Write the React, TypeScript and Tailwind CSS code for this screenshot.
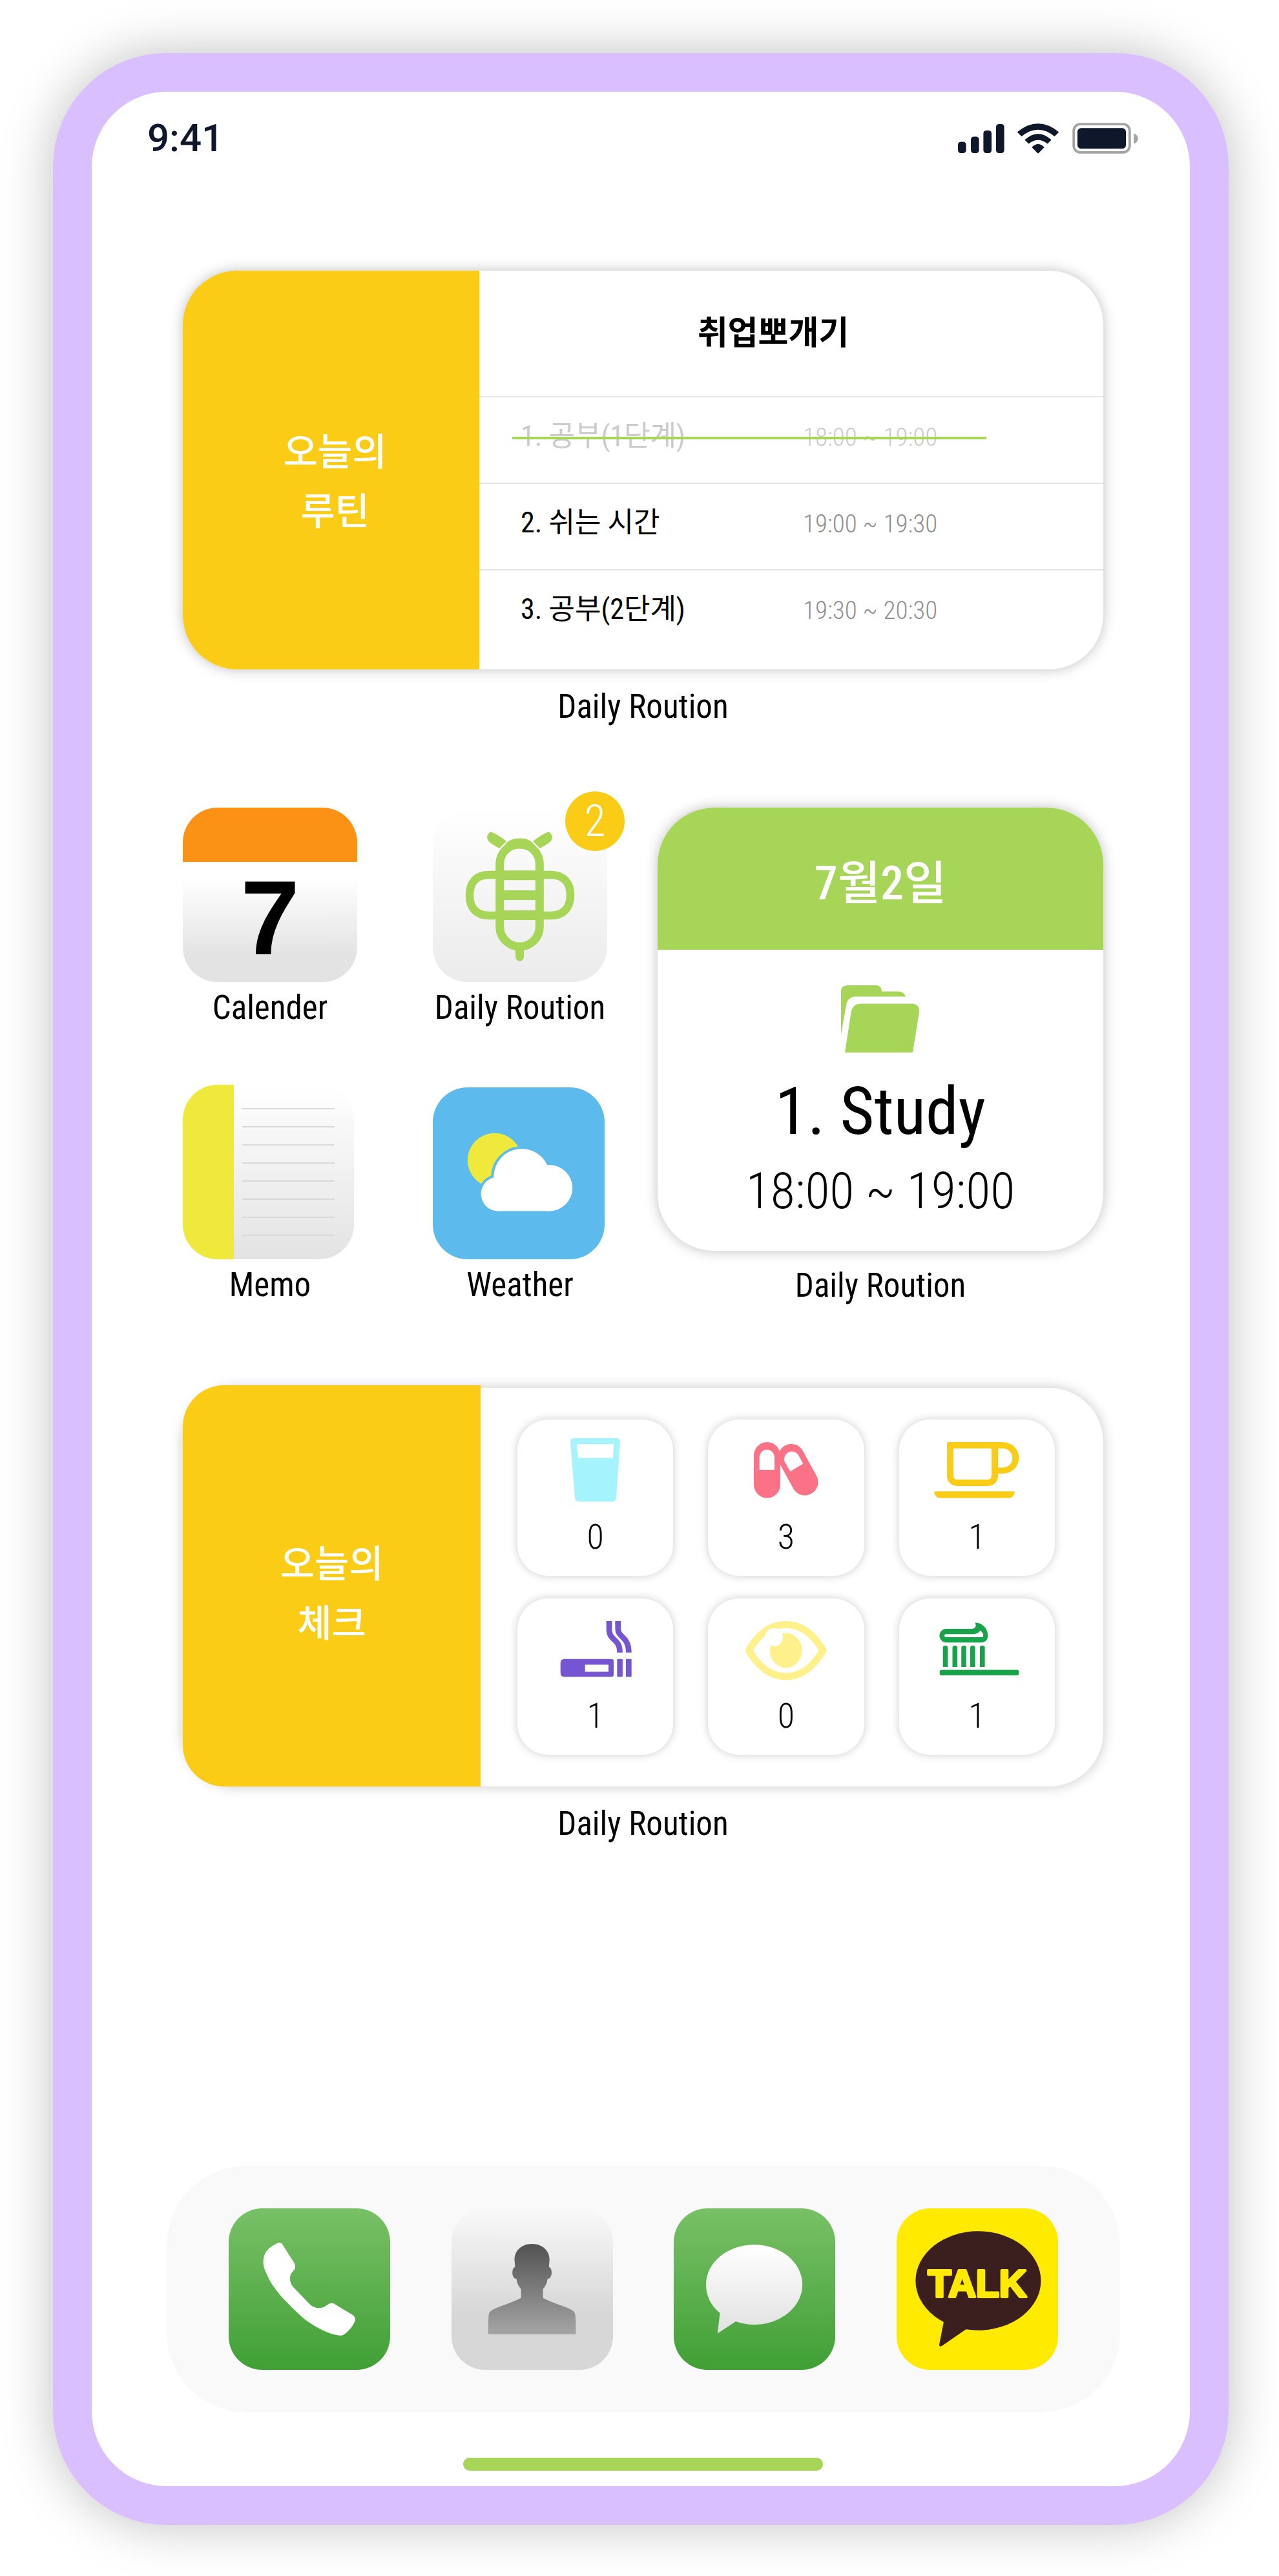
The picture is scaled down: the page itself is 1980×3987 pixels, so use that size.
import type { ReactNode } from 'react';

const routines = [
  { id: 1, title: '1. 공부(1단계)', time: '18:00 ~ 19:00', done: true },
  { id: 2, title: '2. 쉬는 시간', time: '19:00 ~ 19:30', done: false },
  { id: 3, title: '3. 공부(2단계)', time: '19:30 ~ 20:30', done: false },
];

function StatusIcons() {
  return (
    <svg viewBox="15 13 279 48" className="h-12 w-[279px]" role="img" aria-label="Signal, Wi-Fi and battery">
      <g fill="#0f172a">
        <rect x="15" y="42.5" width="12.6" height="17.5" rx="4.5" />
        <rect x="35" y="34.5" width="12.6" height="25.5" rx="4.5" />
        <rect x="54.4" y="25" width="12.6" height="35" rx="4.5" />
        <rect x="74" y="15" width="12.6" height="45" rx="4.5" />
        <path d="M139 60.7L129.3 51Q139 40.800 148.700 51Z" />
        <path d="M118.300 39.400Q139 21 159.700 39.400L153.500 45.600Q139 34 124.500 45.600Z" />
        <path d="M106.700 27.400Q139 1 171.300 27.400L164.500 34.200Q139 13.500 113.500 34.200Z" />
        <rect x="200" y="21.300" width="75" height="31.800" rx="5.500" />
      </g>
      <rect x="194.200" y="15.200" width="86.600" height="43.600" rx="10" fill="none" stroke="#a3a3a3" strokeWidth="3.800" />
      <path d="M287.300 29.300Q293.700 32 293.700 37.500T287.300 45.700Z" fill="#a3a3a3" />
    </svg>
  );
}

function BeeIcon() {
  return (
    <svg viewBox="0 0 270 270" className="size-[270px]" aria-hidden="true">
      <g fill="none" stroke="#a6d558" strokeWidth="12.500">
        <rect x="103.700" y="56.500" width="61.600" height="158.500" rx="30.800" strokeWidth="13" />
        <path d="M103.700 104H87C67 104 57 116 57 135.500S67 167 87 167H103.700M165.300 104H182C202 104 213 116 213 135.500S202 167 182 167H165.300" />
        <path d="M103 104.700H166M103 135.500H166M103 166.500H166" strokeWidth="15" />
        <path d="M109 128V143M160 128V143" strokeWidth="6" />
        <path d="M134.500 220V231" strokeWidth="13" strokeLinecap="round" />
      </g>
      <path d="M89.700 37.300Q101 42 114 52L103 63Q94 58 87 53Q80 44 89.700 37.300ZM179.300 37.300Q168 42 155 52L166 63Q175 58 182 53Q189 44 179.300 37.300Z" fill="#a6d558" />
      <path d="M110 60Q114 52 125 48.500Q134.500 46.500 144 48.500Q155 52 159 60L154 69Q134.500 58 115 69Z" fill="#a6d558" />
    </svg>
  );
}

function WeatherIcon() {
  return (
    <svg viewBox="0 0 266 266" className="size-[266px]" aria-hidden="true">
      <circle cx="95.800" cy="112.700" r="42" fill="#eee93a" />
      <g fill="#5cbbec">
        <circle cx="137.800" cy="138.500" r="47.500" />
        <circle cx="101" cy="165" r="30.300" />
      </g>
      <g fill="#fff">
        <circle cx="137.800" cy="138.500" r="43.500" />
        <circle cx="180.500" cy="155.700" r="35.700" />
        <circle cx="101" cy="165" r="26.400" />
        <rect x="101" y="145" width="80" height="46.400" />
      </g>
    </svg>
  );
}

function FolderIcon() {
  return (
    <svg viewBox="0 0 122 105" className="h-[105px] w-[122px]" fill="#a6d558" aria-hidden="true">
      <path d="M0 77V11Q0 1 10 1H54Q63 1 63 10.500H89Q98 11 100 18.500H22Q10 19 8 32Z" />
      <path d="M6 105L15.500 43Q18 29.500 31 29.500H109Q122 30 121 42L111 105Z" />
    </svg>
  );
}

const glassIcon = (
  <path fill="#a5f3fc" fillRule="evenodd" d="M47 5H112Q118.500 5 118 11L112 97Q111 103 106 103H54Q49 103 48 97L41 11Q41 5 47 5ZM51 14L53 35.400H107L108 14Z" />
);

const pillsIcon = (
  <g>
    <rect x="30" y="11" width="41" height="86.500" rx="20.500" fill="#fb7185" />
    <path d="M88 34.500L109 73" stroke="#fb7185" strokeWidth="41" strokeLinecap="round" />
    <path fill="#fff" d="M38.700 54V33.500A11.700 12 0 0 1 62 33.500V54Z" />
    <path fill="#fff" d="M86.300 56.500L106.300 44.600L98.700 30.500A12 12 0 0 0 77.500 41Z" />
  </g>
);

const cupIcon = (
  <path
    fill="#facc15"
    fillRule="evenodd"
    d="M37 11H119C135 11 145.300 22 145.300 35.400S135 59.800 119 59.800H113V63C113 73 106 79 96 79H51C41 79 34 73 34 63V14Q34 11 37 11ZM43.700 20.800V62Q43.700 69 50 69H97Q103 69 103 62V20.800ZM113 20.800V50.600H119C130 50.600 135.300 43 135.300 35.700S130 20.800 119 20.800ZM16 87.300H137Q139.500 87.300 138.500 90Q136 97.400 130 97.400H23Q17 97.400 14.500 90Q13.500 87.300 16 87.300Z"
  />
);

const cigaretteIcon = (
  <g fill="#7655d2">
    <path fillRule="evenodd" d="M32 69.700H104.500Q108 69.700 108 73V94Q108 97.300 104.500 97.300H32Q25.700 97.300 25.700 91V76Q25.700 69.700 32 69.700ZM63.700 78.500V89.500H100V78.500Z" />
    <rect x="113.300" y="69.700" width="8.600" height="27.600" rx="1" />
    <rect x="126.900" y="69.700" width="8.800" height="27.600" rx="1" />
    <path d="M101 11V24C101 42 117.600 37 117.600 59.800M114.700 11V23C114.700 37 131.300 34 131.300 59.800" fill="none" stroke="#7655d2" strokeWidth="8.700" />
  </g>
);

const eyeIcon = (
  <g>
    <path d="M22.300 56.500C38 29 58 16.500 79.700 16.500S121 29 137 56.500C121 84 101 96.700 79.700 96.700S38 84 22.300 56.500Z" fill="none" stroke="#fef08a" strokeWidth="11" strokeLinejoin="round" />
    <ellipse cx="79.700" cy="56.500" rx="24.800" ry="27" fill="#fef08a" />
    <circle cx="61" cy="36" r="14" fill="#fff" />
  </g>
);

const toothbrushIcon = (
  <g fill="#16a34a">
    <rect x="22.700" y="86.500" width="122.600" height="8.600" rx="3" />
    <path d="M27.700 82V52Q27.700 49 31.500 49T35.300 52V82ZM42.500 82V52Q42.500 49 46.300 49T50.100 52V82ZM56.200 82V52Q56.200 49 60 49T63.800 52V82ZM70 82V52Q70 49 73.800 49T77.600 52V82ZM85 82V52Q85 49 88.800 49T92.600 52V82Z" />
    <path fillRule="evenodd" d="M33 23H71C77 23 80.500 20 77.500 13.500C88 13 97.300 22 97.300 34C97.300 40 93 44.200 87 44.200H33A10.600 10.600 0 0 1 33 23ZM33 31.200H74C80 31.200 83.500 29 85.500 25.500C89 28 90.300 31 90.300 33.500Q90 36 87.500 36H33Q30 36 30 33.600T33 31.200Z" />
  </g>
);

const checks: { name: string; count: number; icon: ReactNode }[] = [
  { name: '물', count: 0, icon: glassIcon },
  { name: '약', count: 3, icon: pillsIcon },
  { name: '커피', count: 1, icon: cupIcon },
  { name: '담배', count: 1, icon: cigaretteIcon },
  { name: '눈', count: 0, icon: eyeIcon },
  { name: '양치', count: 1, icon: toothbrushIcon },
];

function Label({ children }: { children: ReactNode }) {
  return <span className="block text-center text-[51px] leading-[64px] whitespace-nowrap">{children}</span>;
}

function AppButton({ label, children }: { label: string; children: ReactNode }) {
  return (
    <button type="button" className="flex w-[270px] flex-col items-center gap-2">
      <span className="flex h-[270px] w-full items-end">{children}</span>
      <Label>{label}</Label>
    </button>
  );
}

function DockButton({ label, className, children }: { label: string; className: string; children: ReactNode }) {
  return (
    <button type="button" aria-label={label} className={`size-[250px] overflow-hidden rounded-[52px] ${className}`}>
      {children}
    </button>
  );
}

export default function App() {
  return (
    <main className="flex min-h-screen flex-col bg-white pt-[82px] pr-[78px] pb-[79px] pl-[82px] font-['Roboto_Condensed','Noto_Sans_CJK_KR',sans-serif] text-black">
      <div className="flex flex-1 flex-col rounded-[176px] border-[60px] border-[#dabfff] bg-white shadow-[0_0_80px_rgba(0,0,0,0.25)]">
        <header className="flex items-center justify-between pt-10 pr-20 pl-[86px] font-['Roboto'] text-[60px] leading-[64px] font-medium text-[#0f172a]">
          <time>9:41</time>
          <StatusIcons />
        </header>

        <div className="flex flex-1 flex-col pt-[173px] pr-[134px] pl-[141px]">
          <section>
            <div className="flex overflow-hidden rounded-[84px] shadow-[0_0_20px_rgba(0,0,0,0.25)]">
              <h2 className="flex w-[459px] shrink-0 items-center justify-center bg-[#facc15] pt-9 pl-3 text-center text-[58px] leading-[92px] font-medium text-white">
                오늘의
                <br />
                루틴
              </h2>
              <div className="flex-1">
                <h3 className="flex h-[194px] items-center justify-center pr-14 text-[51px] font-bold">취업뽀개기</h3>
                <ul className="pb-[21px]">
                  {routines.map((r) => (
                    <li
                      key={r.id}
                      className={`relative flex h-[134px] items-center border-t-2 border-[#e5e5e5] pb-3 pl-16 ${r.done ? 'text-[#cbcbcb]' : ''}`}
                    >
                      <span className="w-[437px] text-[44px]">{r.title}</span>
                      <span className={`pt-1 text-[39px] font-light ${r.done ? '' : 'text-[#8f8f8f]'}`}>{r.time}</span>
                      {r.done && <span className="absolute top-[61px] left-[51px] h-1 w-[734px] bg-[#a6d558]" />}
                    </li>
                  ))}
                </ul>
              </div>
            </div>
            <div className="pt-[26px]">
              <Label>Daily Roution</Label>
            </div>
          </section>

          <section className="flex justify-between gap-[78px] pt-[124px]">
            <div className="grid grid-cols-[270px_270px] gap-x-[117px] gap-y-[86px]">
              <AppButton label="Calender">
                <span className="flex size-full flex-col overflow-hidden rounded-[54px] bg-linear-to-b from-white from-40% to-[#e3e3e3] to-85%">
                  <span className="h-[84px] bg-[#fb9216]" />
                  <span className="flex flex-1 items-center justify-center pb-3 font-['Liberation_Sans'] text-[164px] leading-none font-bold">7</span>
                </span>
              </AppButton>
              <AppButton label="Daily Roution">
                <span className="relative size-full rounded-[54px] bg-linear-to-b from-white to-[#ebebeb]">
                  <BeeIcon />
                  <span className="absolute -top-[25px] -right-[27px] flex size-[92px] items-center justify-center rounded-full bg-[#facc15] text-[68px] leading-none font-light text-white">
                    2
                  </span>
                </span>
              </AppButton>
              <AppButton label="Memo">
                <span className="flex h-full w-[265px] overflow-hidden rounded-[54px] bg-linear-to-b from-white to-[#e3e3e3]">
                  <span className="w-[79px] bg-[#eee93a]" />
                  <span className="flex flex-1 flex-col gap-[26px] pt-9 pr-[30px] pl-[13px]">
                    {Array.from({ length: 8 }, (_, i) => (
                      <span key={i} className="h-0.5 bg-[#d9d9d9]" />
                    ))}
                  </span>
                </span>
              </AppButton>
              <AppButton label="Weather">
                <span className="rounded-[54px] bg-[#5cbbec]">
                  <WeatherIcon />
                </span>
              </AppButton>
            </div>

            <div className="flex-1">
              <article className="flex h-[686px] flex-col items-center overflow-hidden rounded-[88px] shadow-[0_0_20px_rgba(0,0,0,0.25)]">
                <h2 className="flex h-[220px] w-full items-center justify-center bg-[#a6d558] pt-4 text-[72px] font-medium text-white">
                  7월2일
                </h2>
                <div className="flex flex-col items-center pt-[54px]">
                  <FolderIcon />
                  <strong className="pt-7 text-[102px] leading-[126px] font-normal">1. Study</strong>
                  <span className="text-[78px] leading-[122px] font-light">18:00 ~ 19:00</span>
                </div>
              </article>
              <div className="pt-[22px]">
                <Label>Daily Roution</Label>
              </div>
            </div>
          </section>

          <section className="pt-[126px]">
            <div className="flex rounded-[84px] shadow-[0_0_20px_rgba(0,0,0,0.22)]">
              <h2 className="-mt-1 flex w-[461px] shrink-0 items-center justify-center rounded-l-[64px] bg-[#facc15] pt-6 text-center text-[58px] leading-[92px] font-medium text-white">
                오늘의
                <br />
                체크
              </h2>
              <div className="grid flex-1 grid-cols-3 gap-x-[54px] gap-y-[35px] py-[49px] pr-[75px] pl-[57px]">
                {checks.map((c) => (
                  <button
                    key={c.name}
                    type="button"
                    aria-label={`${c.name} ${c.count}`}
                    className="flex h-[242px] flex-col items-center rounded-[48px] bg-white pt-6 shadow-[0_0_14px_rgba(0,0,0,0.2)]"
                  >
                    <svg viewBox="0 0 160 104" className="h-[104px] w-40" fill="none" aria-hidden="true">
                      {c.icon}
                    </svg>
                    <span className="pt-[22px] text-[54px] leading-[64px] font-light">{c.count}</span>
                  </button>
                ))}
              </div>
            </div>
            <div className="pt-[26px]">
              <Label>Daily Roution</Label>
            </div>
          </section>

          <nav className="-mr-[26px] -ml-[25px] mt-auto flex h-[382px] items-center justify-between rounded-[124px] bg-[#f9f9f9] px-24">
            <DockButton label="Phone" className="bg-linear-to-b from-[#78c066] to-[#3fa035]">
              <svg viewBox="0 0 250 250" className="size-full">
                <path
                  fill="#fff"
                  d="M78.500 53.300C81 53.300 83 55 84 57L101 83.700C103 87 104 91 101.500 95L97 100.500C94 105 94 115 99.400 121.300L126 148.700C132 155 144 156 150 151L154 148.500C157 146.500 161 146 164.300 148.300L192 165C195.500 167.500 196.500 171 195.500 174.500C192.500 182 186 190 179 195C175 198 169 197 157.500 193.500C140 187 125 178 114 168.500C102 157.500 91 146.500 80 134.700C70 122 64 114 60.600 105.300C55 94 53 88 53.800 80C54.500 69 61 61 72.700 55.300Q76 53.300 78.500 53.300Z"
                />
              </svg>
            </DockButton>
            <DockButton label="Contacts" className="bg-linear-to-b from-[#f9f9f9] to-[#d7d7d7] to-65%">
              <svg viewBox="0 0 250 250" className="size-full">
                <defs>
                  <linearGradient id="person" x1="0" y1="0" x2="0" y2="1">
                    <stop offset="0" stopColor="#525252" />
                    <stop offset="1" stopColor="#a5a5a5" />
                  </linearGradient>
                </defs>
                <path
                  fill="url(#person)"
                  d="M124.600 55C108 55 97.500 66 97.500 79L98.400 91C93 91 92 109 100.500 109C101.500 116 104 121 107.600 125V138.700C97 144 82 149 67.400 155C61 158 58 160 57.500 166C56.700 175 56.700 185 56.700 195H192.500C192.500 185 192.500 175 191.700 166C191.200 160 188 158 181.800 155C167 149 152 144 141.600 138.700V125C145.200 121 147.700 116 148.700 109C157.200 109 156.200 91 150.800 91L151.700 79C151.700 66 141.200 55 124.600 55Z"
                />
              </svg>
            </DockButton>
            <DockButton label="Messages" className="bg-linear-to-b from-[#78c066] to-[#3fa035]">
              <svg viewBox="0 0 250 250" className="size-full">
                <defs>
                  <linearGradient id="bubble" x1="0" y1="56" x2="0" y2="194" gradientUnits="userSpaceOnUse">
                    <stop offset="0" stopColor="#fff" />
                    <stop offset="1" stopColor="#e1e1e1" />
                  </linearGradient>
                </defs>
                <path
                  fill="url(#bubble)"
                  d="M124.600 56.300C165.800 56.300 199.200 84 199.200 118S165.800 180 124.600 180Q110 180 96 175L67.700 193.700L71.600 162C58 151 50 136 50 118C50 84 83.400 56.300 124.600 56.300Z"
                />
              </svg>
            </DockButton>
            <DockButton label="KakaoTalk" className="bg-[#ffea00]">
              <svg viewBox="0 0 250 250" className="size-full">
                <ellipse cx="126.400" cy="112" rx="97" ry="76.700" fill="#3b1e1e" />
                <path d="M74 170L66 211Q66 215 70 213L112 184Z" fill="#3b1e1e" />
                <text
                  x="125"
                  y="137"
                  textAnchor="middle"
                  fill="#ffea00"
                  stroke="#ffea00"
                  strokeWidth="4"
                  strokeLinejoin="round"
                  className="font-['Liberation_Sans'] text-[59px] font-bold"
                >
                  TALK
                </text>
              </svg>
            </DockButton>
          </nav>
          <div className="mx-auto mt-[70px] mb-6 h-5 w-[557px] rounded-full bg-[#a6d558]" />
        </div>
      </div>
    </main>
  );
}
